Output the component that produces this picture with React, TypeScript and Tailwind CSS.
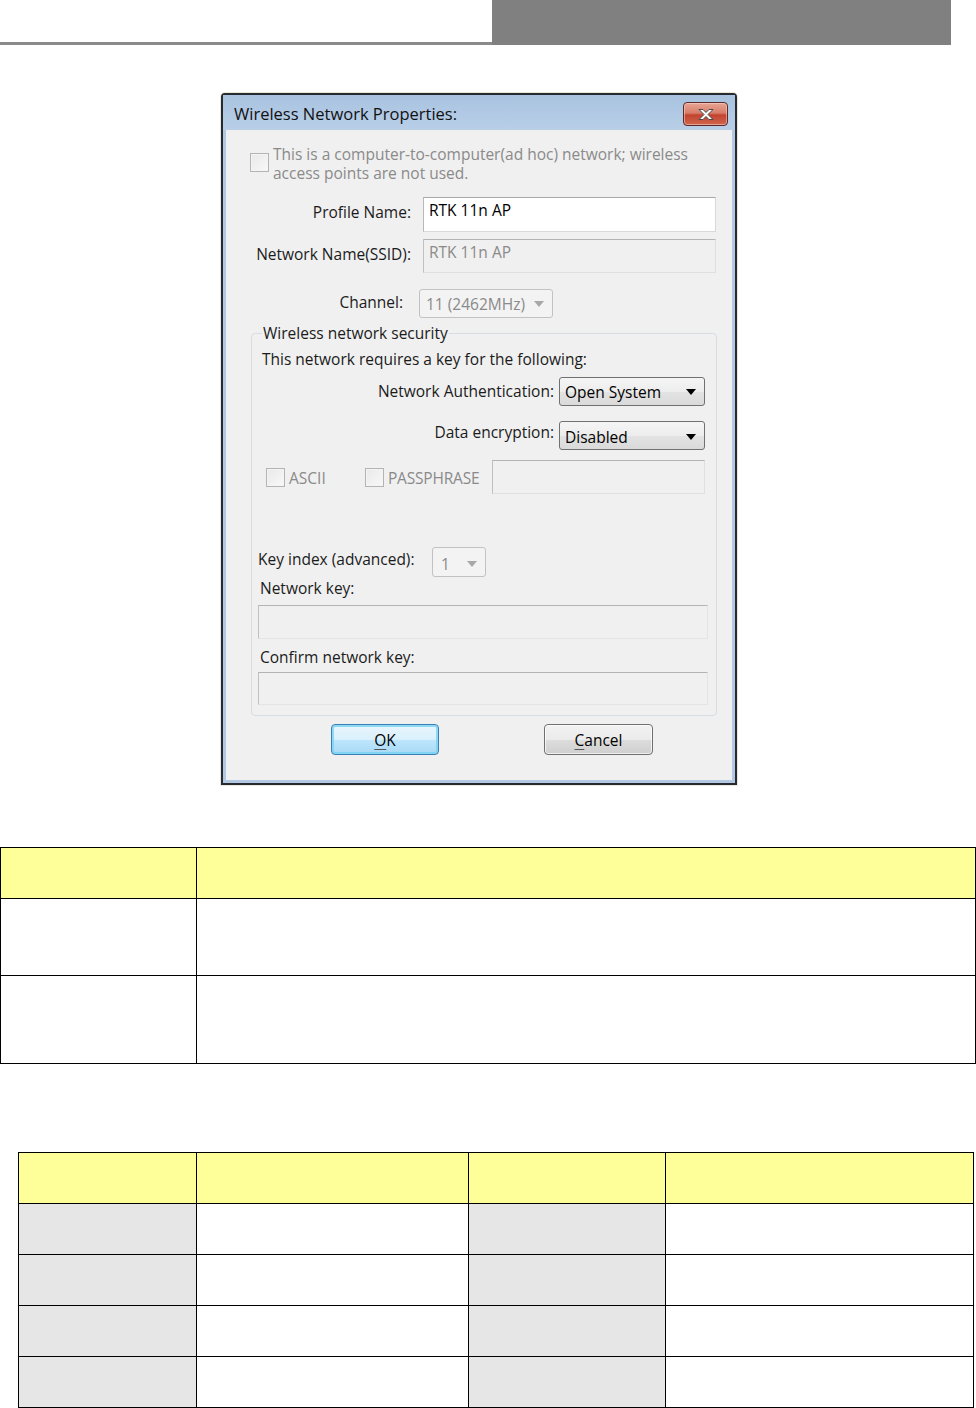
import React from "react";

const Arrow = ({ color }: { color: string }) => (
  <svg width="10" height="6" viewBox="0 0 10 6">
    <path d="M0 0 L10 0 L5 6 Z" fill={color} />
  </svg>
);

const Check = ({ className }: { className: string }) => (
  <div
    className={
      "border border-[#b4b4b4] bg-[linear-gradient(135deg,#e9e9e9,#f8f8f8)] shadow-[inset_0_0_0_1px_#f4f4f4] " +
      className
    }
  />
);

export default function App() {
  return (
    <div className="w-[976px] h-[1408px] bg-white font-['Open_Sans',sans-serif] text-[15.5px] leading-[20px] text-[#1b1b1b] overflow-hidden">
      {/* page header */}
      <div className="flex h-[45px]">
        <div className="w-[492px] flex flex-col justify-end">
          <div className="h-[3px] bg-[#8a8a8a]" />
        </div>
        <div className="w-[459px] bg-[#808080]" />
      </div>

      {/* dialog */}
      <div className="ml-[221px] mt-[48px] w-[516px] h-[692px] border-2 border-[#262b31] rounded-t-[4px] bg-[#b3c9e3] shadow-[0_0_0_1px_#ebe8da] flex flex-col">
        {/* title bar */}
        <div className="h-[35px] flex items-start justify-between bg-[linear-gradient(to_bottom,#a8c2df,#b9cfe8)]">
          <div className="ml-[11px] mt-[9px] text-[16.5px] text-[#111]">
            Wireless Network Properties:
          </div>
          <div className="mt-[7px] mr-[7px] w-[45px] h-[24px] rounded-[4px] border border-[#5a2a2a] bg-[linear-gradient(to_bottom,#e8a595_0%,#d77e6a_45%,#c2432f_55%,#d0674d_100%)] shadow-[inset_0_0_0_1px_rgba(255,220,210,0.5)] flex items-center justify-center">
            <svg width="18" height="13" viewBox="0 0 18 13">
              <path
                d="M2 1.5 L6 1.5 L9 4.5 L12 1.5 L16 1.5 L11 6.5 L16 11.5 L12 11.5 L9 8.5 L6 11.5 L2 11.5 L7 6.5 Z"
                fill="#ffffff"
                stroke="#4a4a4a"
                strokeWidth="1"
                strokeLinejoin="round"
              />
            </svg>
          </div>
        </div>

        {/* content */}
        <div className="mx-[3px] h-[650px] bg-[#f0f0f0] flex flex-col">
          {/* ad hoc */}
          <div className="mt-[15px] ml-[24px] flex items-start">
            <Check className="mt-[8px] w-[19px] h-[19px]" />
            <div className="ml-[4px] text-[#8a8a8a] leading-[19px]">
              This is a computer-to-computer(ad hoc) network; wireless
              <br />
              access points are not used.
            </div>
          </div>

          {/* profile name */}
          <div className="mt-[14px] flex items-start">
            <div className="w-[185px] mt-[5px] text-right">Profile Name:</div>
            <div className="ml-[12px] w-[293px] h-[35px] bg-white border border-[#d9d9d9] border-t-[#a8a8a8] border-l-[#b8b8b8] pl-[5px] pt-[2px] text-[#000]">
              RTK 11n AP
            </div>
          </div>

          {/* SSID */}
          <div className="mt-[7px] flex items-start">
            <div className="w-[185px] mt-[5px] text-right">Network Name(SSID):</div>
            <div className="ml-[12px] w-[293px] h-[34px] bg-[#f0f0f0] border border-[#e0e0e0] border-t-[#b4b4b4] border-l-[#c0c0c0] pl-[5px] pt-[2px] text-[#8a8a8a]">
              RTK 11n AP
            </div>
          </div>

          {/* channel */}
          <div className="mt-[16px] flex items-start">
            <div className="w-[177px] mt-[3px] text-right">Channel:</div>
            <div className="ml-[16px] w-[134px] h-[29px] rounded-[3px] border border-[#c2c2c2] bg-[#f3f3f3] flex items-center justify-between pl-[6px] pr-[8px] text-[#8a8a8a]">
              <span>11 (2462MHz)</span>
              <Arrow color="#a8a8a8" />
            </div>
          </div>

          {/* security group */}
          <fieldset className="mt-[5px] ml-[25px] w-[466px] h-[393px] box-border border border-[#d8dde3] rounded-[4px] p-0 flex flex-col">
            <legend className="ml-[10px] px-[1px] leading-[20px]">Wireless network security</legend>

            <div className="mt-[6px] ml-[10px]">This network requires a key for the following:</div>

            <div className="mt-[8px] flex items-start justify-end pr-[11px]">
              <div className="mt-[4px] mr-[5px]">Network Authentication:</div>
              <div className="w-[146px] h-[29px] rounded-[3px] border border-[#707070] bg-[linear-gradient(to_bottom,#f5f5f5_0%,#ededed_50%,#e3e3e3_51%,#dadada_100%)] flex items-center justify-between pl-[5px] pr-[8px] text-[#000]">
                <span>Open System</span>
                <Arrow color="#000" />
              </div>
            </div>

            <div className="mt-[15px] flex items-start justify-end pr-[11px]">
              <div className="mt-[1px] mr-[5px]">Data encryption:</div>
              <div className="w-[146px] h-[29px] rounded-[3px] border border-[#707070] bg-[linear-gradient(to_bottom,#f5f5f5_0%,#ededed_50%,#e3e3e3_51%,#dadada_100%)] flex items-center justify-between pl-[5px] pr-[8px] pt-[3px] text-[#000]">
                <span>Disabled</span>
                <Arrow color="#000" />
              </div>
            </div>

            <div className="mt-[10px] flex items-start">
              <Check className="ml-[14px] mt-[8px] w-[19px] h-[19px]" />
              <div className="ml-[4px] mt-[8px] w-[76px] text-[#8a8a8a]">ASCII</div>
              <Check className="mt-[8px] w-[19px] h-[19px]" />
              <div className="ml-[4px] mt-[8px] w-[104px] text-[#8a8a8a] tracking-[-0.2px]">PASSPHRASE</div>
              <div className="w-[213px] h-[34px] border border-[#e0e0e0] border-t-[#b4b4b4] border-l-[#c0c0c0]" />
            </div>

            <div className="mt-[53px] flex items-start">
              <div className="ml-[6px] mt-[2px] w-[174px]">Key index (advanced):</div>
              <div className="w-[54px] h-[30px] rounded-[3px] border border-[#c2c2c2] bg-[#f3f3f3] flex items-center justify-between pl-[8px] pr-[8px] pt-[3px] text-[#8a8a8a]">
                <span>1</span>
                <Arrow color="#a8a8a8" />
              </div>
            </div>

            <div className="mt-[1px] ml-[8px]">Network key:</div>
            <div className="mt-[7px] ml-[6px] w-[450px] h-[34px] border border-[#e4e4e4] border-t-[#b4b4b4] border-l-[#c0c0c0]" />

            <div className="mt-[8px] ml-[8px]">Confirm network key:</div>
            <div className="mt-[5px] ml-[6px] w-[450px] h-[33px] border border-[#e4e4e4] border-t-[#b4b4b4] border-l-[#c0c0c0]" />
          </fieldset>

          {/* buttons */}
          <div className="mt-[8px] flex">
            <div className="ml-[105px] w-[108px] h-[31px] rounded-[4px] border border-[#3c7fb1] bg-[linear-gradient(to_bottom,#eaf6fd_0%,#d9f0fc_50%,#bee6fd_51%,#a7d9f5_100%)] shadow-[inset_0_0_0_2px_rgba(120,210,245,0.8)] flex items-center justify-center text-[#000]">
              <span>
                <span className="underline underline-offset-[3px] decoration-[#555]">O</span>K
              </span>
            </div>
            <div className="ml-[105px] w-[109px] h-[31px] rounded-[4px] border border-[#707070] bg-[linear-gradient(to_bottom,#f2f2f2_0%,#ebebeb_50%,#dddddd_51%,#cfcfcf_100%)] shadow-[inset_0_0_0_1px_rgba(255,255,255,0.7)] flex items-center justify-center text-[#000]">
              <span>
                <span className="underline underline-offset-[3px] decoration-[#555]">C</span>ancel
              </span>
            </div>
          </div>
        </div>
      </div>

      {/* table 1 */}
      <div className="mt-[62px] w-[976px] border-t border-l border-black grid grid-cols-[196px_779px]">
        <div className="h-[51px] bg-[#ffff99] border-r border-b border-black" />
        <div className="h-[51px] bg-[#ffff99] border-r border-b border-black" />
        <div className="h-[77px] border-r border-b border-black" />
        <div className="h-[77px] border-r border-b border-black" />
        <div className="h-[88px] border-r border-b border-black" />
        <div className="h-[88px] border-r border-b border-black" />
      </div>

      {/* table 2 */}
      <div className="mt-[88px] ml-[18px] w-[956px] border-t border-l border-black grid grid-cols-[178px_272px_197px_308px]">
        <div className="h-[51px] bg-[#ffff99] border-r border-b border-black" />
        <div className="h-[51px] bg-[#ffff99] border-r border-b border-black" />
        <div className="h-[51px] bg-[#ffff99] border-r border-b border-black" />
        <div className="h-[51px] bg-[#ffff99] border-r border-b border-black" />
        {[0, 1, 2, 3].map((i) => (
          <React.Fragment key={i}>
            <div className="h-[51px] bg-[#e6e6e6] border-r border-b border-black" />
            <div className="h-[51px] bg-white border-r border-b border-black" />
            <div className="h-[51px] bg-[#e6e6e6] border-r border-b border-black" />
            <div className="h-[51px] bg-white border-r border-b border-black" />
          </React.Fragment>
        ))}
      </div>
    </div>
  );
}
